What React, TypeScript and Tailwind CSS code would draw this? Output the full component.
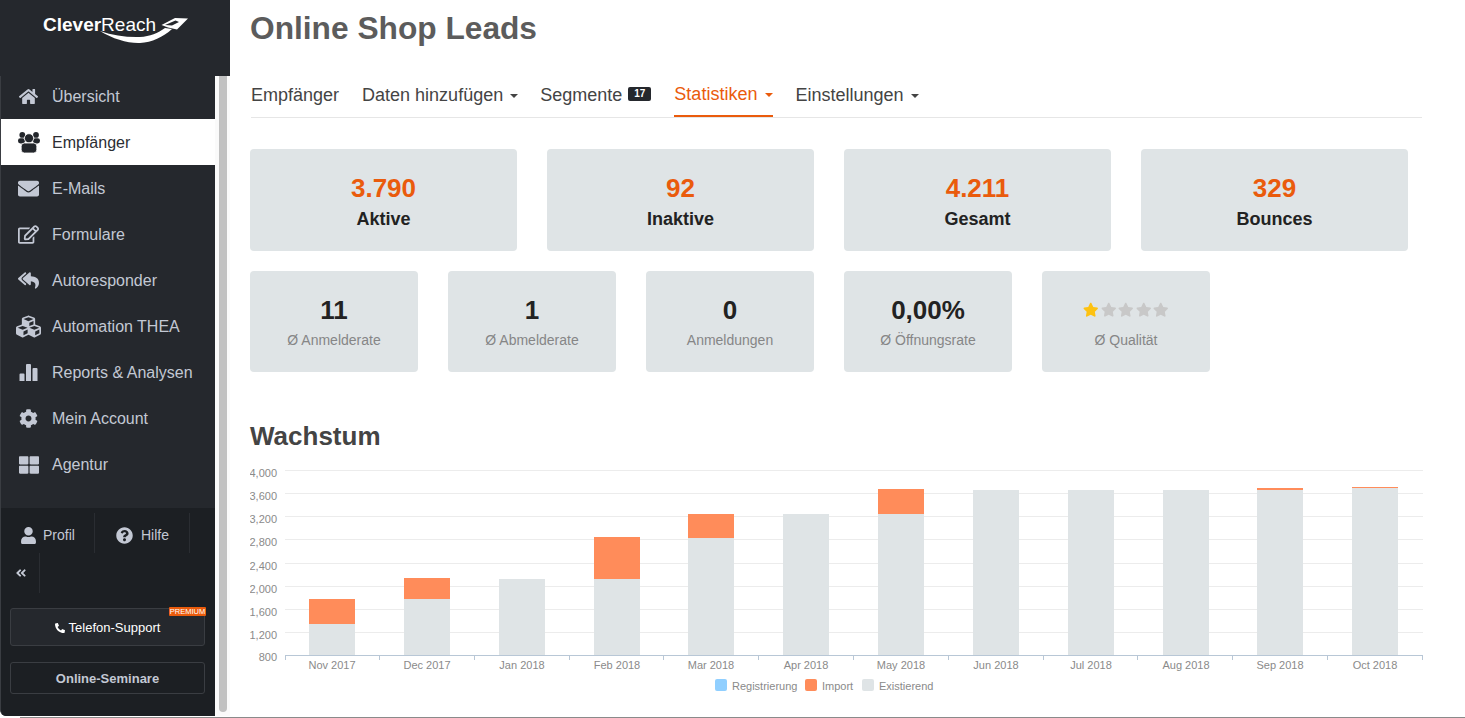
import React from "react";
import { FaHome, FaEnvelope, FaRegEdit, FaReplyAll, FaCubes, FaCog, FaThLarge, FaUser, FaQuestionCircle, FaAngleDoubleLeft, FaPhoneAlt, FaStar } from "react-icons/fa";

const BarsIcon = ({ className }: { className?: string }) => (
  <svg viewBox="0 0 19 19" className={className} fill="currentColor">
    <path d="M0.5 11.5a1 1 0 0 1 1-1h3a1 1 0 0 1 1 1V18H0.5z M7 2a1 1 0 0 1 1-1h3a1 1 0 0 1 1 1v16H7z M13.5 6a1 1 0 0 1 1-1h3a1 1 0 0 1 1 1v12h-5z" />
  </svg>
);

const UsersIcon = ({ className }: { className?: string }) => (
  <svg viewBox="0 0 22 21" className={className} fill="currentColor">
    <circle cx="4.3" cy="2.9" r="2.9" />
    <circle cx="18" cy="2.9" r="2.9" />
    <rect x="0" y="6.2" width="7" height="5.2" rx="2.4" />
    <rect x="15" y="6.2" width="7" height="5.2" rx="2.4" />
    <circle cx="11" cy="6.3" r="4.6" stroke="#fff" strokeWidth="0.8" />
    <rect x="3.2" y="11" width="15.6" height="10" rx="3.2" stroke="#fff" strokeWidth="0.8" />
  </svg>
);

const nav = [
  { label: "Übersicht", Icon: FaHome, size: "text-[19px]" },
  { label: "Empfänger", Icon: UsersIcon, size: "w-[22px] h-[21px]", active: true },
  { label: "E-Mails", Icon: FaEnvelope, size: "text-[21px]" },
  { label: "Formulare", Icon: FaRegEdit, size: "text-[21px]" },
  { label: "Autoresponder", Icon: FaReplyAll, size: "text-[21px]" },
  { label: "Automation THEA", Icon: FaCubes, size: "text-[25px]" },
  { label: "Reports & Analysen", Icon: BarsIcon, size: "w-[19px] h-[19px]" },
  { label: "Mein Account", Icon: FaCog, size: "text-[19px]" },
  { label: "Agentur", Icon: FaThLarge, size: "text-[20px]" },
];

const bigCards = [
  { v: "3.790", l: "Aktive" },
  { v: "92", l: "Inaktive" },
  { v: "4.211", l: "Gesamt" },
  { v: "329", l: "Bounces" },
];
const smallCards = [
  { v: "11", l: "Ø Anmelderate" },
  { v: "1", l: "Ø Abmelderate" },
  { v: "0", l: "Anmeldungen" },
  { v: "0,00%", l: "Ø Öffnungsrate" },
];

const gridY: [string, number][] = [
  ["4,000", 470.5], ["3,600", 493.5], ["3,200", 516.5], ["2,800", 539.5], ["2,400", 563.5],
  ["2,000", 586.5], ["1,600", 609.5], ["1,200", 632.5], ["800", 655.5],
];
const bars = [
  { m: "Nov 2017", x: 309, e: 624, i: 599 },
  { m: "Dec 2017", x: 404, e: 599, i: 578 },
  { m: "Jan 2018", x: 499, e: 579, i: 579 },
  { m: "Feb 2018", x: 594, e: 579, i: 537 },
  { m: "Mar 2018", x: 688, e: 538, i: 514 },
  { m: "Apr 2018", x: 783, e: 514, i: 514 },
  { m: "May 2018", x: 878, e: 514, i: 489 },
  { m: "Jun 2018", x: 973, e: 490, i: 490 },
  { m: "Jul 2018", x: 1068, e: 490, i: 490 },
  { m: "Aug 2018", x: 1163, e: 490, i: 490 },
  { m: "Sep 2018", x: 1257, e: 490, i: 488 },
  { m: "Oct 2018", x: 1352, e: 488, i: 487 },
];
const ticks = [285, 379, 474, 569, 663, 758, 853, 948, 1043, 1137, 1232, 1327, 1422];

function Chart() {
  const ox = 250;
  const oy = 460;
  return (
    <svg width="1190" height="250" viewBox={`${ox} ${oy} 1190 250`} className="block" style={{ fontFamily: "'Liberation Sans', sans-serif" }}>
      {gridY.slice(0, 8).map(([t, y]) => (
        <line key={t} x1={285} x2={1423} y1={y} y2={y} stroke="#ececec" strokeWidth="1" />
      ))}
      {gridY.map(([t, y]) => (
        <text key={t} x={277} y={y + (t === "800" ? 5.5 : 6)} textAnchor="end" fontSize="11" fill="#8a8a8a">{t}</text>
      ))}
      {bars.map((b) => (
        <g key={b.m}>
          <rect x={b.x} y={b.i} width={46} height={b.e - b.i} fill="#ff8c5a" />
          <rect x={b.x} y={b.e} width={46} height={655 - b.e} fill="#dfe4e6" />
          <text x={b.x + 23} y={669} textAnchor="middle" fontSize="11" fill="#8a8a8a">{b.m}</text>
        </g>
      ))}
      <line x1={285} x2={1423} y1={655.5} y2={655.5} stroke="#b8c7d6" strokeWidth="1" />
      {ticks.map((x) => (
        <line key={x} x1={x + 0.5} x2={x + 0.5} y1={655} y2={660} stroke="#b8c7d6" strokeWidth="1" />
      ))}
      <rect x={715} y={679} width={12} height={12} rx={2} fill="#90cfff" />
      <text x={732} y={690} fontSize="11" fill="#8a8a8a">Registrierung</text>
      <rect x={805} y={679} width={12} height={12} rx={2} fill="#ff8c5a" />
      <text x={822} y={690} fontSize="11" fill="#8a8a8a">Import</text>
      <rect x={862} y={679} width={12} height={12} rx={2} fill="#dfe4e6" />
      <text x={879} y={690} fontSize="11" fill="#8a8a8a">Existierend</text>
    </svg>
  );
}

function Logo() {
  return (
    <div className="relative h-[76px] pl-[43px] pt-[13px]">
      <span className="block text-[19px] leading-[24px] text-white">
        <span className="font-bold">Clever</span>
        <span className="font-normal">Reach</span>
      </span>
      <svg viewBox="0 0 230 76" className="absolute left-0 top-0 w-[230px] h-[76px]">
        <path d="M100 31 C113 39 128 43.5 140 43 C152 42.5 163 37 172 29 L165 28 C158 33 150 36.5 140 37 C127 37.5 113 35.5 100 31 Z" fill="#fff" />
        <path d="M161.5 25 L175 18 L188 18.5 L177 29.5 L168 27.5 Z" fill="#fff" />
        <path d="M165 25 L175.5 20.5 L179 22 L172 25.5 Z" fill="#25282d" />
      </svg>
    </div>
  );
}

export default function App() {
  return (
    <div className="relative w-[1465px] h-[718px] overflow-hidden flex bg-white" style={{ fontFamily: "'Liberation Sans', Arial, sans-serif" }}>
      <div className="w-[230px] shrink-0 flex flex-col">
        <div className="h-[76px] bg-[#25282d] shrink-0 relative z-10">
          <Logo />
        </div>
        <div className="flex-1 flex min-h-0">
          <aside className="w-[215px] flex flex-col bg-[#25282d] border-l border-[#3a3d42] rounded-bl-[6px] h-[640px] overflow-hidden">
            <nav className="mt-[-3px] h-[435px] shrink-0">
              {nav.map(({ label, Icon, size, active }) => (
                <div key={label} className={`h-[46px] flex items-center pt-[1px] ${active ? "bg-white text-[#2b2e33]" : "text-[#c3c8d4]"}`}>
                  <span className={`w-[51px] pl-[4px] flex justify-center shrink-0 ${active ? "text-[#23262b]" : "text-[#c3c8d4]"}`}>
                    <Icon className={size} />
                  </span>
                  <span className="text-[16px] leading-none">{label}</span>
                </div>
              ))}
            </nav>
            <div className="flex-1 bg-[#1c1f23] pt-[5px]">
              <div className="flex h-[40px] text-[#c3c8d4]">
                <div className="w-[94px] flex items-center pl-[19px] pt-[4px] gap-[6px] border-r border-[#2a2d32]">
                  <FaUser className="text-[17px]" />
                  <span className="text-[14px]">Profil</span>
                </div>
                <div className="w-[95px] flex items-center pl-[21px] pt-[4px] gap-[8px] border-r border-[#2a2d32]">
                  <FaQuestionCircle className="text-[17px]" />
                  <span className="text-[14px]">Hilfe</span>
                </div>
              </div>
              <div className="flex h-[40px] text-[#c3c8d4]">
                <div className="w-[39px] flex items-center pl-[14px] border-r border-[#2a2d32]">
                  <FaAngleDoubleLeft className="text-[12px]" />
                </div>
              </div>
              <div className="pl-[9px] pr-[10px] mt-[15px] flex flex-col gap-[16px]">
                <div className="relative h-[38px] pt-[1px] bg-[#25282d] border border-[#3a3d42] rounded-[3px] flex items-center justify-center gap-[4px] text-white">
                  <FaPhoneAlt className="text-[10px]" />
                  <span className="text-[13px]">Telefon-Support</span>
                  <span className="absolute right-[-2px] top-[-2px] h-[9px] w-[37px] text-center bg-[#ea5b0c] text-white text-[7.5px] leading-[9px] rounded-[1px]">PREMIUM</span>
                </div>
                <div className="h-[32px] pt-[1px] border border-[#3a3d42] rounded-[3px] flex items-center justify-center text-[#c3c8d4] text-[13px] font-bold">
                  Online-Seminare
                </div>
              </div>
            </div>
          </aside>
          <div className="w-[15px] h-[640px] bg-[#fafafa] pl-[4px]">
            <div className="w-[8px] h-[636px] bg-[#c1c1c1] rounded-b-[4px]" />
          </div>
        </div>
      </div>

      <main className="flex-1 flex flex-col pl-[20px] min-w-0">
        <h1 className="text-[31.7px] leading-[34px] font-bold text-[#5c5c5c] mt-[11px]">Online Shop Leads</h1>
        <div className="w-[1171px] ml-[1px] mt-[26px] h-[47px] border-b border-[#e6e6e6] flex items-stretch text-[18px] text-[#444]">
          <div className="flex items-center mr-[23px] pt-[3px]">Empfänger</div>
          <div className="flex items-center mr-[22px] pt-[3px] gap-[7px]">
            Daten hinzufügen <span className="w-0 h-0 border-x-[4px] border-x-transparent border-t-[4px] border-t-[#444]" />
          </div>
          <div className="flex items-center mr-[23px] pt-[3px] gap-[6px]">
            Segmente
            <span className="mb-[4px] bg-[#25282d] text-white text-[10px] leading-[14px] font-bold rounded-[2px] px-[6px]">17</span>
          </div>
          <div className="flex items-center mr-[22px] pt-[3px] gap-[8px] text-[#ea5b0c] border-b-2 border-[#ea5b0c]">
            Statistiken <span className="w-0 h-0 border-x-[4px] border-x-transparent border-t-[4px] border-t-[#ea5b0c]" />
          </div>
          <div className="flex items-center pt-[3px] gap-[7px]">
            Einstellungen <span className="w-0 h-0 border-x-[4px] border-x-transparent border-t-[4px] border-t-[#444]" />
          </div>
        </div>

        <div className="flex gap-[30px] mt-[31px]">
          {bigCards.map((c) => (
            <div key={c.l} className="w-[267px] h-[102px] bg-[#dfe4e6] rounded-[4px] flex flex-col items-center justify-center pt-[7px]">
              <div className="text-[26px] leading-[30px] font-bold text-[#ea5b0c]">{c.v}</div>
              <div className="text-[18px] leading-[30px] mt-[1px] font-bold text-[#222]">{c.l}</div>
            </div>
          ))}
        </div>
        <div className="flex gap-[30px] mt-[20px]">
          {smallCards.map((c) => (
            <div key={c.l} className="w-[168px] h-[101px] bg-[#dfe4e6] rounded-[4px] flex flex-col items-center justify-center pt-[2px]">
              <div className="text-[26px] leading-[28px] font-bold text-[#222]">{c.v}</div>
              <div className="text-[14px] leading-[20px] mt-[6px] text-[#868686]">{c.l}</div>
            </div>
          ))}
          <div className="w-[168px] h-[101px] bg-[#dfe4e6] rounded-[4px] flex flex-col items-center justify-center pt-[2px]">
            <div className="flex h-[28px] items-center gap-[2px] text-[15.5px] text-[#c8c8c8]">
              <FaStar className="text-[#fdc212]" />
              <FaStar />
              <FaStar />
              <FaStar />
              <FaStar />
            </div>
            <div className="text-[14px] leading-[20px] mt-[6px] text-[#868686]">Ø Qualität</div>
          </div>
        </div>
        <h2 className="text-[26px] leading-[30px] font-bold text-[#444] mt-[49px]">Wachstum</h2>
        <div className="mt-[9px]">
          <Chart />
        </div>
      </main>
      <div className="absolute left-[20px] right-0 bottom-0 h-[1px] bg-[#8a8a8a]" />
    </div>
  );
}
